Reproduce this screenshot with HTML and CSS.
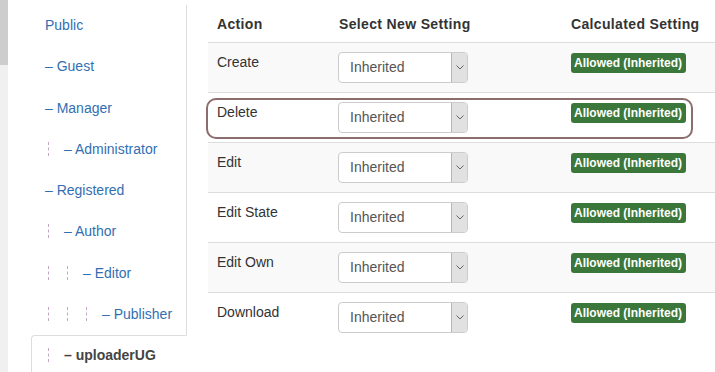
FILE: index.html
```html
<!DOCTYPE html>
<html>
<head>
    <meta charset="UTF-8">
	<title>Permissions</title>
	<link rel="stylesheet" href="styles.css">
</head>
<body>
	<div class="page">
        <div class="scrollbar">
            <div class="thumb"></div>
        </div>

        <div class="sidebar">
            <ul class="groups">
                <li><a href="#">Public</a></li>
                <li><a href="#">&ndash; Guest</a></li>
                <li><a href="#">&ndash; Manager</a></li>
                <li><a href="#"><span class="gi"></span>&ndash; Administrator</a></li>
                <li><a href="#">&ndash; Registered</a></li>
                <li><a href="#"><span class="gi"></span>&ndash; Author</a></li>
                <li><a href="#"><span class="gi"></span><span class="gi"></span>&ndash; Editor</a></li>
                <li><a href="#"><span class="gi"></span><span class="gi"></span><span class="gi"></span>&ndash; Publisher</a></li>
                <li class="active"><a href="#"><span class="gi"></span>&ndash; uploaderUG</a></li>
            </ul>
        </div>

        <div class="content">
            <table class="rules">
                <thead>
                    <tr>
                        <th class="col-action">Action</th>
                        <th class="col-select">Select New Setting</th>
                        <th>Calculated Setting</th>
                    </tr>
                </thead>
                <tbody>
                    <tr>
                        <td>Create</td>
                        <td><div class="select"><span class="select-text">Inherited</span><span class="select-arrow"><svg width="8" height="5" viewBox="0 0 8 5"><path d="M0.5 0.5 L4 4 L7.5 0.5" fill="none" stroke="#666" stroke-width="1"/></svg></span></div></td>
                        <td><span class="badge">Allowed (Inherited)</span></td>
                    </tr>
                    <tr>
                        <td>Delete</td>
                        <td><div class="select"><span class="select-text">Inherited</span><span class="select-arrow"><svg width="8" height="5" viewBox="0 0 8 5"><path d="M0.5 0.5 L4 4 L7.5 0.5" fill="none" stroke="#666" stroke-width="1"/></svg></span></div></td>
                        <td><span class="badge">Allowed (Inherited)</span></td>
                    </tr>
                    <tr>
                        <td>Edit</td>
                        <td><div class="select"><span class="select-text">Inherited</span><span class="select-arrow"><svg width="8" height="5" viewBox="0 0 8 5"><path d="M0.5 0.5 L4 4 L7.5 0.5" fill="none" stroke="#666" stroke-width="1"/></svg></span></div></td>
                        <td><span class="badge">Allowed (Inherited)</span></td>
                    </tr>
                    <tr>
                        <td>Edit State</td>
                        <td><div class="select"><span class="select-text">Inherited</span><span class="select-arrow"><svg width="8" height="5" viewBox="0 0 8 5"><path d="M0.5 0.5 L4 4 L7.5 0.5" fill="none" stroke="#666" stroke-width="1"/></svg></span></div></td>
                        <td><span class="badge">Allowed (Inherited)</span></td>
                    </tr>
                    <tr>
                        <td>Edit Own</td>
                        <td><div class="select"><span class="select-text">Inherited</span><span class="select-arrow"><svg width="8" height="5" viewBox="0 0 8 5"><path d="M0.5 0.5 L4 4 L7.5 0.5" fill="none" stroke="#666" stroke-width="1"/></svg></span></div></td>
                        <td><span class="badge">Allowed (Inherited)</span></td>
                    </tr>
                    <tr>
                        <td>Download</td>
                        <td><div class="select"><span class="select-text">Inherited</span><span class="select-arrow"><svg width="8" height="5" viewBox="0 0 8 5"><path d="M0.5 0.5 L4 4 L7.5 0.5" fill="none" stroke="#666" stroke-width="1"/></svg></span></div></td>
                        <td><span class="badge">Allowed (Inherited)</span></td>
                    </tr>
                </tbody>
            </table>

            <!-- marca que resalta la fila Delete -->
            <div class="highlight"></div>
        </div>
	</div>
</body>
</html>
```

FILE: styles.css
```css
		body {
			margin: 0;
			background-color: #ffffff;
			font-family: "Liberation Sans", Arial, sans-serif;
			font-size: 14px;
			color: #333333;
			overflow: hidden;
		}

		.page {
			display: flex;
			height: 372px;
		}

		.scrollbar {
			width: 8px;
			flex-shrink: 0;
			background-color: #f0f0f0;
		}

		.thumb {
			height: 65px;
			background-color: #cdcdcd;
		}

		.sidebar {
			width: 179px;
			flex-shrink: 0;
			margin-top: 5px;
		}

        .groups {
            list-style: none;
            margin: 0;
            padding: 0 0 0 23px;
            border-right: 1px solid #dddddd;
        }

        .groups a {
            display: block;
            height: 39.25px;
            line-height: 39.25px;
            padding-left: 13px;
            border: 1px solid transparent;
            color: #326fb2;
            text-decoration: none;
            white-space: nowrap;
        }

        .groups .active a {
            margin-right: -1px;
            background-color: #ffffff;
            border-color: #dddddd;
            border-right-color: transparent;
            border-radius: 4px 0 0 4px;
            color: #444444;
            font-weight: bold;
        }

        /* linea punteada de cada nivel del arbol */
        .gi {
            display: inline-block;
            width: 15px;
            height: 14px;
            margin-left: 3px;
            border-left: 1px dashed #c4a7c4;
            vertical-align: -2px;
        }

		.content {
			position: relative;
			width: 507px;
			margin-left: 21px;
			margin-top: 5px;
			flex-shrink: 0;
		}

        .rules {
            width: 507px;
            border-collapse: collapse;
            table-layout: fixed;
        }

        .rules th {
            text-align: left;
            font-weight: bold;
            line-height: 20px;
            letter-spacing: 0.35px;
            padding: 9px 8px 8px 9px;
        }

        .col-action {
            width: 105px;
        }

        .col-select {
            width: 215px;
        }

        .rules td {
            vertical-align: top;
            line-height: 20px;
            padding: 9px 8px 9px 9px;
            border-top: 1px solid #dddddd;
        }

        .rules tbody tr:nth-child(odd) td {
            background-color: #f9f9f9;
        }

        .select {
            display: flex;
            width: 130px;
            height: 31px;
            margin-left: -1px;
            box-sizing: border-box;
            border: 1px solid #cccccc;
            border-radius: 4px;
            background-color: #ffffff;
            overflow: hidden;
        }

        .select-text {
            flex: 1;
            padding-left: 11px;
            line-height: 29px;
            color: #555555;
        }

        .select-arrow {
            display: flex;
            align-items: center;
            justify-content: center;
            width: 15px;
            background-color: #e1e1e1;
            border-left: 1px solid #b5b5b5;
        }

        .badge {
            display: inline-block;
            margin-top: 1px;
            padding: 3px 4px 3px 3px;
            line-height: 14px;
            font-size: 12px;
            font-weight: bold;
            color: #ffffff;
            background-color: #3b773b;
            border-radius: 3px;
            vertical-align: top;
            white-space: nowrap;
        }

        .highlight {
            position: absolute;
            left: -2px;
            top: 93px;
            width: 483px;
            height: 37px;
            border: 2px solid #8c6c6c;
            border-radius: 10px;
        }
```
